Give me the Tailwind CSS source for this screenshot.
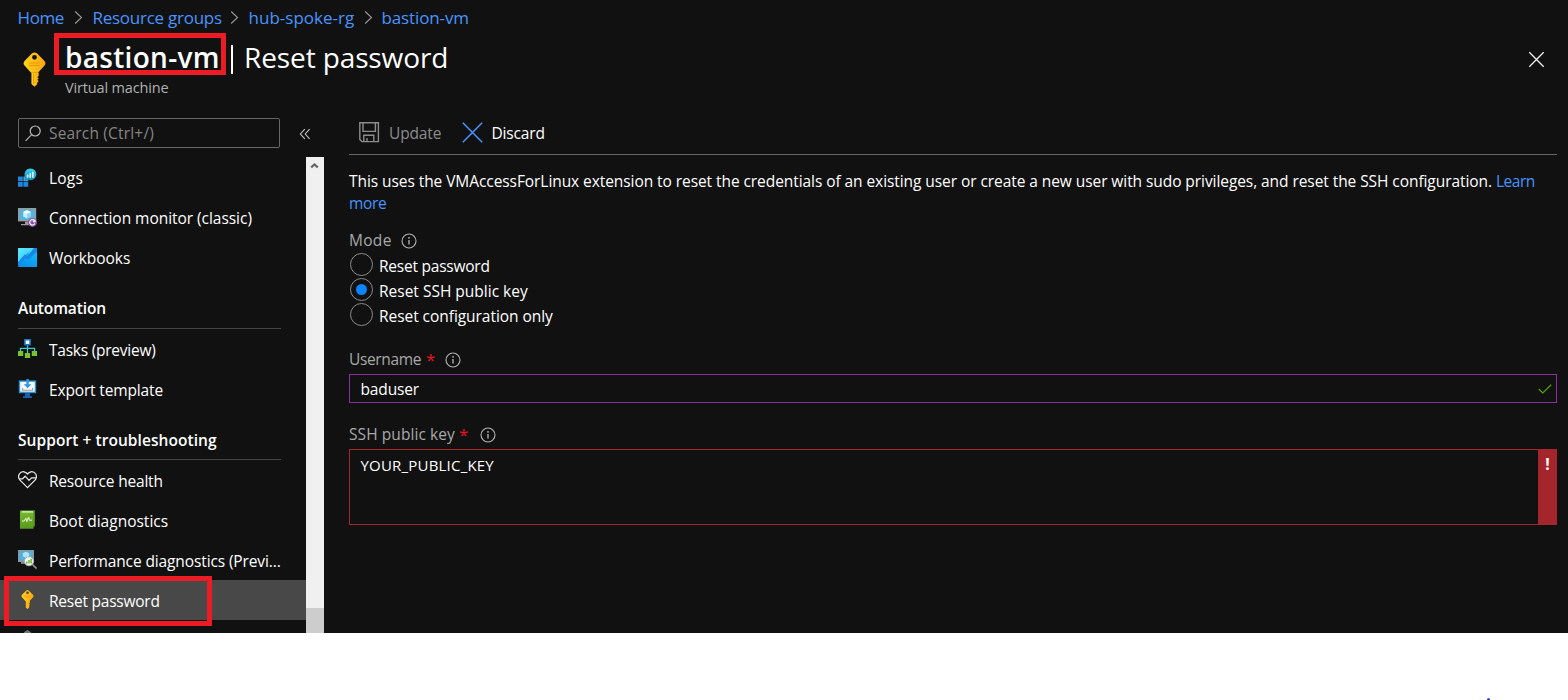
<!DOCTYPE html>
<html lang="en">
<head>
<meta charset="utf-8">
<title>bastion-vm | Reset password</title>
<script src="https://cdn.jsdelivr.net/npm/@tailwindcss/browser@4"></script>
</head>
<body class="bg-white">
<svg width="0" height="0" class="absolute">
  <defs>
    <linearGradient id="gold" x1="0" y1="0" x2="1" y2="0"><stop offset="0" stop-color="#ffd21c"/><stop offset="1" stop-color="#fba80f"/></linearGradient>
    <linearGradient id="cyan" x1="0" y1="0" x2="0" y2="1"><stop offset="0" stop-color="#32d4f5"/><stop offset="1" stop-color="#198ab3"/></linearGradient>
    <linearGradient id="book" x1="0" y1="0" x2="0" y2="1"><stop offset="0" stop-color="#76bc2d"/><stop offset="1" stop-color="#5a9a1c"/></linearGradient>
    <linearGradient id="wb" x1="0" y1="0" x2="1" y2="1"><stop offset="0" stop-color="#5eeafe"/><stop offset="1" stop-color="#32bef0"/></linearGradient>
    <linearGradient id="wb2" x1="1" y1="0" x2="0.5" y2="1"><stop offset="0" stop-color="#12c0fa"/><stop offset="1" stop-color="#0a94ee"/></linearGradient>
    <symbol id="key" viewBox="0 0 24 36">
      <path d="M8.8 21 V33 L12 36 L14.8 33.4 V31.6 L16.4 30.2 L15 28.8 L16.4 27.4 L15 26 L16.4 24.4 V21 Z" fill="url(#gold)"/>
      <path fill-rule="evenodd" d="M9.2 1.2 Q12 -0.8 14.8 1.2 L22.4 9 Q24.4 11.4 22.4 13.8 L15.6 21.4 H8.4 L1.6 13.8 Q-0.4 11.4 1.6 9 Z M12 2.8 A2.5 2.5 0 1 0 12 7.8 A2.5 2.5 0 1 0 12 2.8 Z" fill="url(#gold)"/>
      <path d="M6.5 11.2 H17.5 M6.5 13.8 H17.5 M11 22.5 V33" stroke="#f0900c" stroke-width="1"/>
    </symbol>
    <symbol id="info" viewBox="0 0 16 16">
      <circle cx="8" cy="8" r="7" fill="none" stroke="#b4b4b4" stroke-width="1.1"/>
      <path d="M8 7 V11.6" stroke="#c8c8c8" stroke-width="1.2"/><circle cx="8" cy="4.9" r=".8" fill="#c8c8c8"/>
    </symbol>
  </defs>
</svg>

<div class="relative h-[700px] w-[1568px] overflow-hidden font-['Open_Sans',sans-serif] text-[15.5px] text-white">
  <div class="flex h-[633px] flex-col overflow-hidden bg-[#111111]">
    <nav class="flex h-[35px] shrink-0 items-center whitespace-nowrap pl-[17.5px] text-[17px] text-[#4894fe]">
      <a class="w-[59px] tracking-[-0.4px]">Home</a>
      <svg class="-ml-[3px] mr-[10px]" width="9" height="15" viewBox="0 0 9 15" fill="none" stroke="#9a9a9a" stroke-width="1.1"><path d="M1.2 1.5 L7.5 7.5 L1.2 13.5"/></svg>
      <a class="w-[137px] tracking-[-0.26px]">Resource groups</a>
      <svg class="mr-[10px]" width="9" height="15" viewBox="0 0 9 15" fill="none" stroke="#9a9a9a" stroke-width="1.1"><path d="M1.2 1.5 L7.5 7.5 L1.2 13.5"/></svg>
      <a class="w-[115px] tracking-[0.02px]">hub-spoke-rg</a>
      <svg class="mr-[9px]" width="9" height="15" viewBox="0 0 9 15" fill="none" stroke="#9a9a9a" stroke-width="1.1"><path d="M1.2 1.5 L7.5 7.5 L1.2 13.5"/></svg>
      <a class="tracking-[-0.12px]">bastion-vm</a>
    </nav>

    <header class="flex h-[83px] shrink-0 items-start">
      <svg class="ml-[23px] mt-[17px] shrink-0" width="23" height="35"><use href="#key"/></svg>
      <div class="ml-[19px] grow whitespace-nowrap">
        <h1 class="flex h-[44px] text-[28px] leading-[44px]">
          <span class="w-[165.5px] font-semibold tracking-[0.3px]">bastion-vm</span>
          <span class="mt-[10px] h-[29px] w-[2px] bg-white"></span>
          <span class="ml-[11.5px] tracking-[-0.11px]">Reset password</span>
        </h1>
        <p class="text-[14.5px] leading-[18px] tracking-[-0.15px] text-[#b0b0b0]">Virtual machine</p>
      </div>
      <svg class="mr-[23px] mt-[16px]" width="17" height="17" viewBox="0 0 17 17" stroke="#f2f2f2" stroke-width="1.3"><path d="M1.3 1.3 L15.7 15.7 M15.7 1.3 L1.3 15.7"/></svg>
    </header>

    <div class="flex min-h-0 grow">
      <aside class="flex w-[324px] shrink-0 flex-col">
        <div class="flex h-[39px] shrink-0 items-start">
          <div class="ml-[18px] flex h-[30px] w-[262px] items-center rounded-[2px] border border-[#666666] pl-[6px]">
            <svg width="17" height="17" viewBox="0 0 17 17" fill="none" stroke="#b8b8b8" stroke-width="1.2"><circle cx="10.2" cy="6" r="5"/><path d="M6.6 9.7 L.6 15.8"/></svg>
            <span class="ml-[7px] mt-[2px] tracking-[0.18px] text-[#858585]">Search (Ctrl+/)</span>
          </div>
          <svg class="ml-[18.5px] mt-[10px]" width="12" height="12" viewBox="0 0 12 12" fill="none" stroke="#c4c4c4" stroke-width="1.1"><path d="M5.8 1.2 L1.4 6 L5.8 10.8 M10.6 1.2 L6.2 6 L10.6 10.8"/></svg>
        </div>

        <div class="flex min-h-0 grow">
          <ul class="w-[306px] overflow-hidden whitespace-nowrap pt-[1px] leading-[40px]">
            <li class="flex h-[40px] gap-[12px] pl-[18px]">
              <svg class="mt-[10px] shrink-0" width="19" height="19" viewBox="0 0 19 19"><path d="M0 8.5h4.8v4.8H0z M0 14h4.8v4.8H0z M5.4 14h4.8v4.8H5.4z" fill="#1f86dc"/><path d="M5.4 8.5h4.8v4.8H5.4z" fill="#4aa8ee"/><path d="M12.5 .4a5.9 5.9 0 1 1-2.2 11.4L6.8 12.7V8A5.9 5.9 0 0 1 12.5.4z" fill="url(#cyan)"/><path d="M9.6 6.8v3 M12.2 5.3v4.5 M14.9 3.8v6" stroke="#fff" stroke-width="1.4"/></svg>
              <span class="tracking-[0.2px]">Logs</span>
            </li>
            <li class="flex h-[40px] gap-[12px] pl-[18px]">
              <svg class="mt-[10px] shrink-0" width="19" height="19" viewBox="0 0 19 19"><path d="M0 0h18.2v13.4H0z" fill="#9a9a9a"/><path d="M1.4 1.4h15.4v10.6H1.4z" fill="#53b4dc"/><path d="M7 13.4h4v2.6h2v1.2H3V16h4z" fill="#9c9c9c"/><path d="M9 2.2l3.8 1.8v4.4L9 10.4 5.2 8.4V4z" fill="#c8effc"/><path d="M9 5.8l3.8-1.8v4.4L9 10.4z" fill="#8fd3ee"/><path d="M9 2.2l3.8 1.8L9 5.8 5.2 4z" fill="#fff"/><circle cx="14.4" cy="14.4" r="4.5" fill="#8a55a8"/><path d="M16.6 12.7a2.7 2.7 0 1 0 .3 2.8M17 11.7v1.9h-2" fill="none" stroke="#fff" stroke-width="1.1"/></svg>
              <span class="tracking-[-0.04px]">Connection monitor (classic)</span>
            </li>
            <li class="flex h-[40px] gap-[12px] pl-[18px]">
              <svg class="mt-[10px] shrink-0" width="19" height="19" viewBox="0 0 19 19"><rect width="19" height="19" rx=".8" fill="url(#wb2)"/><path d="M0 15.6V.8Q0 0 .8 0H18.4L12.6 6.4 9.8 4.6Z" fill="url(#wb)"/><path d="M0 14.2 L6.6 6.4 L9.6 8 L16 0 H19 V3.6 L10.6 11.6 L7.4 9.8 L0 18.4Z" fill="#1686e8"/></svg>
              <span class="tracking-[-0.06px]">Workbooks</span>
            </li>
            <li class="mb-[1px] ml-[18px] mt-[10px] h-[41px] w-[263px] border-b border-[#444444] font-semibold tracking-[-0.12px]">Automation</li>
            <li class="flex h-[40px] gap-[12px] pl-[18px]">
              <svg class="mt-[9px] shrink-0" width="19" height="19" viewBox="0 0 19 19"><path d="M9.5 6v9 M2.5 13V9.3h14V13" fill="none" stroke="#35c6d8" stroke-width="1.3"/><path d="M6.1 0h6.8v6.4H6.1z" fill="#1b76c8"/><path d="M7.7 1.5h3.6v3.4H7.7z" fill="#fff"/><path d="M0 12h5.2v5H0z M13.8 12H19v5h-5.2z M6.9 14h5.2v5H6.9z" fill="#79c42c"/></svg>
              <span class="tracking-[-0.24px]">Tasks (preview)</span>
            </li>
            <li class="flex h-[40px] gap-[12px] pl-[18px]">
              <svg class="mt-[9px] shrink-0" width="19" height="19" viewBox="0 0 19 19"><path d="M.8 1.4h17.4v12.8H.8z" fill="#2a93dc"/><path d="M2.2 2.8h14.6v9.9H2.2z" fill="#f4f8fb"/><path d="M7 14.2h5v3h2V19H5v-1.8h2z" fill="#1b5fae"/><path d="M8.4 0h2.4v5.2h2.6L9.6 9.3 5.8 5.2h2.6z" fill="#2f96e8"/><path d="M4.6 9v2.2h10V9" fill="none" stroke="#9a9a9a" stroke-width="1.1"/></svg>
              <span class="tracking-[-0.15px]">Export template</span>
            </li>
            <li class="mb-[1px] ml-[18px] mt-[10px] h-[40px] w-[263px] border-b border-[#444444] font-semibold tracking-[0.06px]">Support + troubleshooting</li>
            <li class="flex h-[40px] gap-[12px] pl-[18px]">
              <svg class="mt-[9px] shrink-0" width="19" height="19" viewBox="0 0 19 19" fill="none" stroke="#e8e8e8" stroke-width="1.25"><path d="M9.5 17.6 L2 10.2 Q-.4 7 1.3 4 Q3 1.4 6 1.8 Q8 2.2 9.5 4 Q11 2.2 13 1.8 Q16 1.4 17.7 4 Q19.4 7 17 10.2 Z"/><path d="M1.4 8.8 H4.6 L7.2 6.2 L11 10.4 L13.6 7.8 H17.8"/></svg>
              <span class="tracking-[-0.2px]">Resource health</span>
            </li>
            <li class="flex h-[40px] gap-[12px] pl-[18px]">
              <svg class="mt-[9px] shrink-0" width="19" height="19" viewBox="0 0 19 19"><path d="M3.6.2H17v16.2H3.6z" fill="#4b8716"/><path d="M3.4 1.2h11.8V3H3.4z" fill="#e8f4dc"/><path d="M2 1.6 Q2 .2 3.6.2 V2.4 H15.6 V18.8 H2Z" fill="url(#book)"/><path d="M4 11h2.2l1.6-2.8 1 3.4L10.6 7l.8 3.2H14" fill="none" stroke="#fff" stroke-width=".9"/></svg>
              <span>Boot diagnostics</span>
            </li>
            <li class="flex h-[39px] gap-[12px] pl-[18px]">
              <svg class="mt-[9px] shrink-0" width="19" height="19" viewBox="0 0 19 19"><path d="M0 0h16v12H0z" fill="#8f9599"/><path d="M1.2 1.2h13.6v9.6H1.2z" fill="#4fb0da"/><path d="M3 12h5v1.8H3z" fill="#8a8a8a"/><path d="M8 1.8l3.2 1.5v3L8 8 4.8 6.3v-3z" fill="#b5e6f8"/><path d="M14 14l4.6 4.6" stroke="#8b8f92" stroke-width="1.7"/><circle cx="11" cy="11.2" r="4.6" fill="#f3f6f4" stroke="#a6abae" stroke-width="1"/><path d="M8.9 11.6v2 M11 10v3.6 M13.1 8.8v4.8" stroke="#6cb42c" stroke-width="1.5"/></svg>
              <span class="tracking-[-0.12px]">Performance diagnostics (Previ...</span>
            </li>
            <li class="flex h-[40px] gap-[12px] bg-[#484848] pl-[18px] leading-[42px]">
              <svg class="mt-[10px] shrink-0" width="19" height="19"><use href="#key"/></svg>
              <span class="tracking-[-0.23px]">Reset password</span>
            </li>
            <li class="flex h-[13px] overflow-hidden pl-[18px]">
              <svg class="mt-[10px] shrink-0" width="19" height="19" viewBox="0 0 19 19"><path d="M9.6 0L13 2.2V8H6V2.2z" fill="#777"/></svg>
            </li>
          </ul>
          <div class="flex w-[18px] flex-col justify-between bg-[#f0f0f0]">
            <svg class="ml-[4px] mt-[4px]" width="9" height="9" viewBox="0 0 9 9" fill="none" stroke="#666" stroke-width="2.2"><path d="M1.2 6.4 L4.5 3.4 L7.8 6.4"/></svg>
            <div class="h-[25px] bg-[#cdcdcd]"></div>
          </div>
        </div>
      </aside>

      <main class="ml-[25px] w-[1208px] whitespace-nowrap">
        <div class="flex h-[37px] items-start border-b border-[#666666] leading-[30px]">
          <svg class="ml-[10px] mt-[4px]" width="21" height="21" viewBox="0 0 21 21" fill="none" stroke="#8c8c8c" stroke-width="1.4"><path d="M.8 .8H19.4V19.6H3L.8 17.4Z M4 1V9.4H16.4V1 M4.8 19.5V13.2H14.8V19.5 M8 19.5V16"/></svg>
          <span class="ml-[9px] w-[53px] tracking-[-0.15px] text-[#8c8c8c]">Update</span>
          <svg class="ml-[19.5px] mt-[4px]" width="21" height="21" viewBox="0 0 21 21" stroke="#4894fe" stroke-width="1.5"><path d="M.8 .8 L20.2 20.2 M20.2 .8 L.8 20.2"/></svg>
          <span class="ml-[9px] tracking-[-0.15px]">Discard</span>
        </div>

        <p class="mt-[15px] leading-[22px]"><span class="tracking-[-0.07px]">This uses the VMAccessForLinux extension to reset the credentials of an existing user or create a new user with sudo privileges, and reset the SSH configuration. </span><a class="tracking-[-0.45px] text-[#4894fe]">Learn<br></a><a class="tracking-[-0.3px] text-[#4894fe]">more</a></p>

        <div class="mt-[14px] flex h-[25px] items-center text-[#a8a8a8]"><span class="tracking-[0.3px]">Mode</span><svg class="ml-[9.5px]" width="16" height="16"><use href="#info"/></svg></div>

        <div class="leading-[25px]">
          <label class="flex h-[25px]"><span class="mx-[1px] h-[23px] w-[23px] rounded-full border border-[#8c8c8c]"></span><span class="ml-[5px] mt-[1px] tracking-[-0.23px]">Reset password</span></label>
          <label class="flex h-[25px]"><span class="mx-[1px] flex h-[23px] w-[23px] items-center justify-center rounded-full border border-[#8c8c8c]"><span class="h-[11px] w-[11px] rounded-full bg-[#0a84ff]"></span></span><span class="ml-[5px] mt-[1px]">Reset SSH public key</span></label>
          <label class="flex h-[25px]"><span class="mx-[1px] h-[23px] w-[23px] rounded-full border border-[#8c8c8c]"></span><span class="ml-[5px] mt-[1px] tracking-[-0.05px]">Reset configuration only</span></label>
        </div>

        <div class="mt-[19px] flex h-[26px] items-center text-[#a8a8a8]"><span class="tracking-[-0.35px]">Username</span><span class="ml-[5px] text-[17px] text-[#e81123]">*</span><svg class="ml-[10px]" width="16" height="16"><use href="#info"/></svg></div>
        <div class="mt-px flex h-[29px] items-center justify-between border border-[#8a2da5] pl-[10.5px] pr-[4px]">
          <span class="mt-[2px] tracking-[-0.15px]">baduser</span>
          <svg width="14" height="10" viewBox="0 0 14 10" fill="none" stroke="#57a300" stroke-width="1.2"><path d="M.7 5 L4.8 9 L13.2 .8"/></svg>
        </div>

        <div class="mt-[19px] flex h-[26px] items-center text-[#a8a8a8]"><span class="tracking-[0.08px]">SSH public key</span><span class="ml-[4px] text-[17px] text-[#e81123]">*</span><svg class="ml-[11.5px]" width="16" height="16"><use href="#info"/></svg></div>
        <div class="mt-px flex h-[76px] justify-between border border-[#a4262c] pl-[10.5px] leading-[30px]">
          <span class="text-[15px] tracking-[0.2px]">YOUR_PUBLIC_KEY</span>
          <span class="w-[18px] bg-[#a4262c] pl-px text-center font-bold leading-[28px]">!</span>
        </div>
      </main>
    </div>
  </div>

  <div class="absolute left-[54px] top-[33px] h-[42px] w-[172px] border-[5px] border-[#ed1c24]"></div>
  <div class="absolute left-[4px] top-[576px] h-[50px] w-[208px] border-[5px] border-[#ed1c24]"></div>
  <div class="absolute left-[1487px] top-[698px] h-[3px] w-[3px] rounded-full bg-[#3c3cf0]"></div>
</div>
</body>
</html>
